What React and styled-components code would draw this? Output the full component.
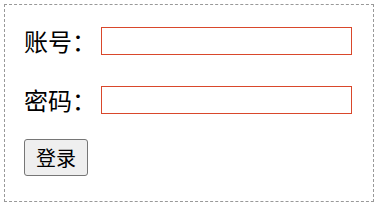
import React from 'react';
import styled, { createGlobalStyle } from 'styled-components';

const GlobalStyle = createGlobalStyle`
  body {
    margin: 0;
    background: #fff;
    font-family: "Noto Sans CJK SC", "Noto Sans", sans-serif;
  }
`;

const Box = styled.div`
  box-sizing: border-box;
  margin: 4px;
  width: 370px;
  height: 198px;
  border: 1px dashed #999;
  padding: 22px 19px 0;
`;

const Row = styled.div`
  display: flex;
  align-items: center;
  height: 28px;
  margin-bottom: ${p => p.$gap}px;
`;

const Label = styled.label`
  width: 77px;
  font-size: 24px;
  line-height: 28px;
  color: #000;
`;

const Field = styled.input`
  box-sizing: border-box;
  width: 251px;
  height: 28px;
  border: 1px solid #d9472b;
  outline: none;
  padding: 0 4px;
  margin: 0;
`;

const Button = styled.button`
  box-sizing: border-box;
  width: 64px;
  height: 37px;
  padding: 0;
  font-family: "Noto Sans CJK SC", sans-serif;
  font-size: 20px;
  color: #000;
  background: #efefef;
  border: 1px solid #767676;
  border-radius: 3px;
`;

export default function App() {
  return (
    <>
      <GlobalStyle />
      <Box>
        <Row $gap={31}>
          <Label>账号：</Label>
          <Field type="text" />
        </Row>
        <Row $gap={25}>
          <Label>密码：</Label>
          <Field type="password" />
        </Row>
        <Button>登录</Button>
      </Box>
    </>
  );
}
